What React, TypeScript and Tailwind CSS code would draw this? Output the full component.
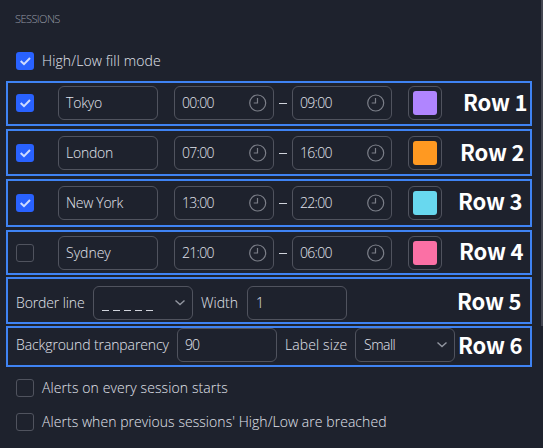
import React from "react";

const field = "h-[34px] shrink-0 rounded-md border border-[#50535e] flex items-center";

function Checkbox({ checked = false }: { checked?: boolean }) {
  return checked ? (
    <div className="flex size-[18px] shrink-0 items-center justify-center rounded-[3px] bg-[#2962ff]">
      <svg width="18" height="18" viewBox="0 0 18 18" fill="none" stroke="#cfdcff" strokeWidth="2">
        <path d="M4.7 9 8 12.2 14 6" />
      </svg>
    </div>
  ) : (
    <div className="size-[18px] shrink-0 rounded-[3px] border border-[#50535e]" />
  );
}

function Clock() {
  return (
    <svg className="ml-auto mr-[6px]" width="18" height="18" viewBox="0 0 18 18" fill="none" stroke="#7c7f89" strokeWidth="1.2">
      <circle cx="8.700" cy="9" r="8" />
      <path d="M8.500 4v5H4.700" />
    </svg>
  );
}

function Chevron() {
  return (
    <svg className="ml-auto mr-[6px]" width="12" height="8" viewBox="0 0 12 8" fill="none" stroke="#9296a0" strokeWidth="1.4">
      <path d="M1.500 1.500 6 5.500 10.500 1.500" />
    </svg>
  );
}

function TimeField({ value }: { value: string }) {
  return (
    <div className={`${field} w-[100px] pl-[7px]`}>
      <span className="tracking-[-0.7px]">{value}</span>
      <Clock />
    </div>
  );
}

type SessionProps = {
  checked?: boolean;
  name: string;
  nameClass: string;
  from: string;
  to: string;
  color: string;
  label: string;
  frame: string;
  labelClass: string;
};

function Session({ checked, name, nameClass, from, to, color, label, frame, labelClass }: SessionProps) {
  return (
    <div className={`ml-[6px] flex w-[526px] items-start border-2 border-[#3f83f3] pl-2 ${frame}`}>
      <div className="flex h-[34px] items-center">
        <Checkbox checked={checked} />
        <div className={`${field} ml-6 w-[100px] pl-[7px]`}>
          <span className={nameClass}>{name}</span>
        </div>
        <div className="ml-4 flex items-center">
          <TimeField value={from} />
          <div className="mx-[5px] h-px w-2 bg-[#d1d4dc]" />
          <TimeField value={to} />
        </div>
        <div className={`${field} ml-4 w-[34px] justify-center`}>
          <div className={`size-6 rounded-[3px] ${color}`} />
        </div>
      </div>
      <RowLabel className={labelClass}>{label}</RowLabel>
    </div>
  );
}

function RowLabel({ className, children }: { className: string; children: React.ReactNode }) {
  return (
    <span className={`whitespace-nowrap font-['Noto_Sans_CJK_SC','Noto_Sans',sans-serif] text-[22px] font-bold tracking-[-0.2px] text-white ${className}`}>
      {children}
    </span>
  );
}

export default function App() {
  return (
    <div className="flex h-[448px] w-[543px] overflow-hidden bg-[#1e222d] font-['Open_Sans','Noto_Sans',sans-serif] text-[14px] leading-[18px] font-light whitespace-nowrap text-[#e2e5ed]">
      <main className="w-[541px] shrink-0">
        <h2 className="ml-[15px] h-[52px] pt-[10px] text-[11px] tracking-[-0.55px] text-[#969aa5]">SESSIONS</h2>
        <div className="flex h-[29px] items-start gap-2 pl-4">
          <Checkbox checked />
          <span className="tracking-[0.12px]">High/Low fill mode</span>
        </div>
        <Session checked name="Tokyo" nameClass="tracking-[-0.2px]" from="00:00" to="09:00" color="bg-[#b085ff]" label="Row 1" frame="h-[45px] pt-[3px]" labelClass="ml-[21px] leading-[30px]" />
        <Session checked name="London" nameClass="tracking-[-0.25px]" from="07:00" to="16:00" color="bg-[#ff9921]" label="Row 2" frame="mt-[3px] h-[47px] pt-[5px]" labelClass="ml-[18px] leading-[30px]" />
        <Session checked name="New York" nameClass="tracking-[-0.3px]" from="13:00" to="22:00" color="bg-[#68d8ef]" label="Row 3" frame="mt-[3px] h-[48px] pt-[5px]" labelClass="ml-[16px] leading-[28px]" />
        <Session name="Sydney" nameClass="" from="21:00" to="06:00" color="bg-[#fb70a5]" label="Row 4" frame="mt-[3px] h-[45px] pt-[4px]" labelClass="ml-[17px] leading-[28px]" />
        <div className="mt-[2px] ml-[6px] flex h-[47px] w-[526px] items-start border-2 border-[#3f83f3] pt-[7px] pl-2">
          <span className="w-[77px] leading-[34px] tracking-[-0.12px]">Border line</span>
          <div className={`${field} w-[100px] pl-2`}>
            <div className="mt-[14px] flex gap-1">
              {[0, 1, 2, 3, 4].map((i) => (
                <i key={i} className="h-px w-[7px] bg-[#d1d4dc]" />
              ))}
            </div>
            <Chevron />
          </div>
          <span className="ml-2 w-[46px] leading-[34px]">Width</span>
          <div className={`${field} w-[100px] pl-2`}>1</div>
          <RowLabel className="ml-[110px] leading-[28px]">Row 5</RowLabel>
        </div>
        <div className="mt-[2px] ml-[6px] flex h-[41px] w-[526px] items-start border-2 border-[#3f83f3] pl-2">
          <span className="w-[161px] leading-[34px] tracking-[-0.1px]">Background tranparency</span>
          <div className={`${field} w-[100px] pl-[7px]`}>
            <span className="tracking-[-0.9px]">90</span>
          </div>
          <span className="ml-2 w-[70px] leading-[34px] tracking-[0.1px]">Label size</span>
          <div className={`${field} w-[100px] pl-2`}>
            <span className="tracking-[-0.5px]">Small</span>
            <Chevron />
          </div>
          <RowLabel className="ml-[3px] leading-[32px]">Row 6</RowLabel>
        </div>
        <div className="mt-3 flex items-center gap-2 pl-4">
          <Checkbox />
          <span className="tracking-[0.1px]">Alerts on every session starts</span>
        </div>
        <div className="mt-4 flex items-center gap-2 pl-4">
          <Checkbox />
          <span className="tracking-[0.055px]">Alerts when previous sessions' High/Low are breached</span>
        </div>
      </main>
      <div className="h-[326px] w-[2px] bg-[#434651]" />
    </div>
  );
}
